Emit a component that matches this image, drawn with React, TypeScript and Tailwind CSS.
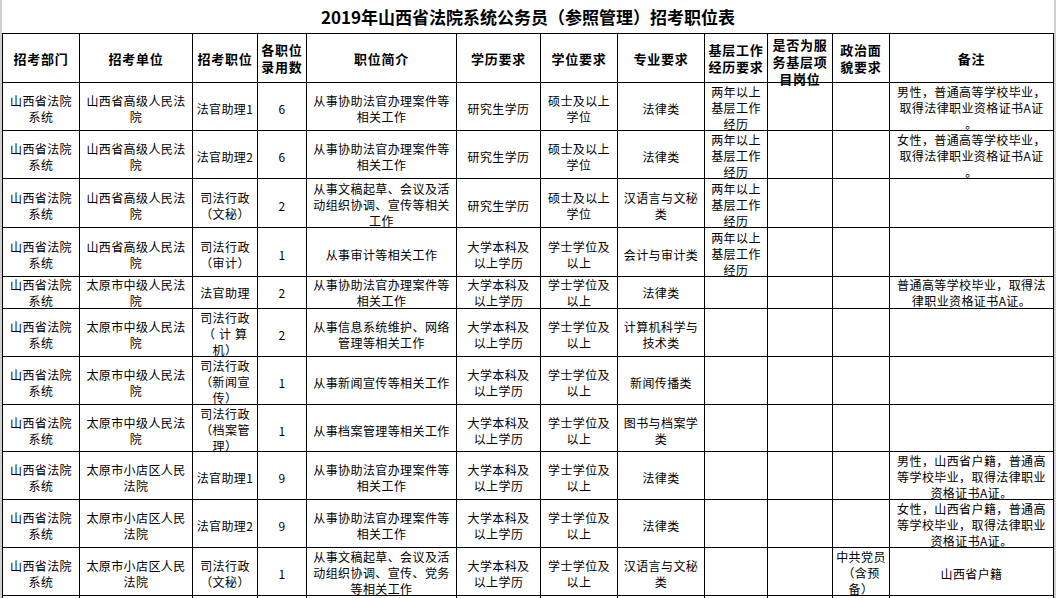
import React from "react";

const FONT = { fontFamily: '"Noto Sans CJK SC", "Noto Sans", sans-serif' };

const COLS =
  "grid grid-cols-[77px_113px_65px_49px_150px_84px_77px_87px_63px_65px_57px_164px] grid-rows-[49px_48px_48px_49px_49px_32px_48px_48px_47px_48px_48px_48px_48px]";

const header: string[] = [
  "招考部门",
  "招考单位",
  "招考职位",
  "各职位|录用数",
  "职位简介",
  "学历要求",
  "学位要求",
  "专业要求",
  "基层工作|经历要求",
  "是否为服|务基层项|目岗位",
  "政治面|貌要求",
  "备注",
];

type Row = { short?: boolean; cells: string[] };

const D = "山西省法院|系统";
const GJ = "山西省高级人民法|院";
const ZJ = "太原市中级人民法|院";
const XD = "太原市小店区人民|法院";
const XFG = "从事协助法官办理案件等|相关工作";
const BK = "大学本科及|以上学历";
const XS = "学士学位及|以上";
const SS = "硕士及以上|学位";
const JC = "两年以上|基层工作|经历";

const rows: Row[] = [
  { cells: [D, GJ, "法官助理1", "6", XFG, "研究生学历", SS, "法律类", JC, "", "", "男性，普通高等学校毕业，|取得法律职业资格证书A证|。"] },
  { cells: [D, GJ, "法官助理2", "6", XFG, "研究生学历", SS, "法律类", JC, "", "", "女性，普通高等学校毕业，|取得法律职业资格证书A证|。"] },
  { cells: [D, GJ, "司法行政|（文秘）", "2", "从事文稿起草、会议及活|动组织协调、宣传等相关|工作", "研究生学历", SS, "汉语言与文秘|类", JC, "", "", ""] },
  { cells: [D, GJ, "司法行政|（审计）", "1", "从事审计等相关工作", BK, XS, "会计与审计类", JC, "", "", ""] },
  { short: true, cells: [D, ZJ, "法官助理", "2", XFG, BK, XS, "法律类", "", "", "", "普通高等学校毕业，取得法|律职业资格证书A证。"] },
  { cells: [D, ZJ, "司法行政|（计算|机）", "2", "从事信息系统维护、网络|管理等相关工作", BK, XS, "计算机科学与|技术类", "", "", "", ""] },
  { cells: [D, ZJ, "司法行政|（新闻宣|传）", "1", "从事新闻宣传等相关工作", BK, XS, "新闻传播类", "", "", "", ""] },
  { cells: [D, ZJ, "司法行政|（档案管|理）", "1", "从事档案管理等相关工作", BK, XS, "图书与档案学|类", "", "", "", ""] },
  { cells: [D, XD, "法官助理1", "9", XFG, BK, XS, "法律类", "", "", "", "男性，山西省户籍，普通高|等学校毕业，取得法律职业|资格证书A证。"] },
  { cells: [D, XD, "法官助理2", "9", XFG, BK, XS, "法律类", "", "", "", "女性，山西省户籍，普通高|等学校毕业，取得法律职业|资格证书A证。"] },
  { cells: [D, XD, "司法行政|（文秘）", "1", "从事文稿起草、会议及活|动组织协调、宣传、党务|等相关工作", BK, XS, "汉语言与文秘|类", "", "", "中共党员|（含预|备）", "山西省户籍"] },
  { cells: ["", "", "", "", "", "", "", "", "", "", "", ""] },
];

function HeaderCell({ text }: { text: string }) {
  const lines = text.split("|");
  const pt = lines.length >= 3 ? "pt-[7px]" : "pt-0";
  return (
    <div
      className={`border-r border-b border-black flex flex-col items-center justify-center text-center whitespace-nowrap text-[13px] tracking-[0.75px] font-bold leading-[17px] text-black ${pt}`}
    >
      {lines.map((l, i) => (
        <span key={i}>{l}</span>
      ))}
    </div>
  );
}

function BodyCell({ text, short }: { text: string; short?: boolean }) {
  const lines = text === "" ? [] : text.split("|");
  const pt = short ? "pt-[1px]" : lines.length >= 3 ? "pt-[3px]" : "pt-[5px]";
  return (
    <div
      className={`border-r border-b border-black flex flex-col items-center justify-center text-center whitespace-nowrap text-[12px] leading-[16px] tracking-[0.4px] text-black ${pt}`}
    >
      {lines.map((l, i) =>
        l === "（计算" ? (
          <span key={i} className="tracking-[4px] pl-[4px]">
            {l}
          </span>
        ) : (
          <span key={i}>{l}</span>
        )
      )}
    </div>
  );
}

export default function App() {
  return (
    <div
      className="w-[1056px] h-[598px] overflow-hidden bg-white border-x-2 border-[#d0d0d0]"
      style={FONT}
    >
      <div className="h-[33px] flex items-center justify-center">
        <h1 className="text-[17px] font-bold text-black leading-none">
          2019年山西省法院系统公务员（参照管理）招考职位表
        </h1>
      </div>
      <div className={`${COLS} border-l border-t border-black w-[1052px]`}>
        {header.map((h, i) => (
          <HeaderCell key={`h${i}`} text={h} />
        ))}
        {rows.map((r, ri) =>
          r.cells.map((c, ci) => (
            <BodyCell key={`${ri}-${ci}`} text={c} short={r.short} />
          ))
        )}
      </div>
    </div>
  );
}
